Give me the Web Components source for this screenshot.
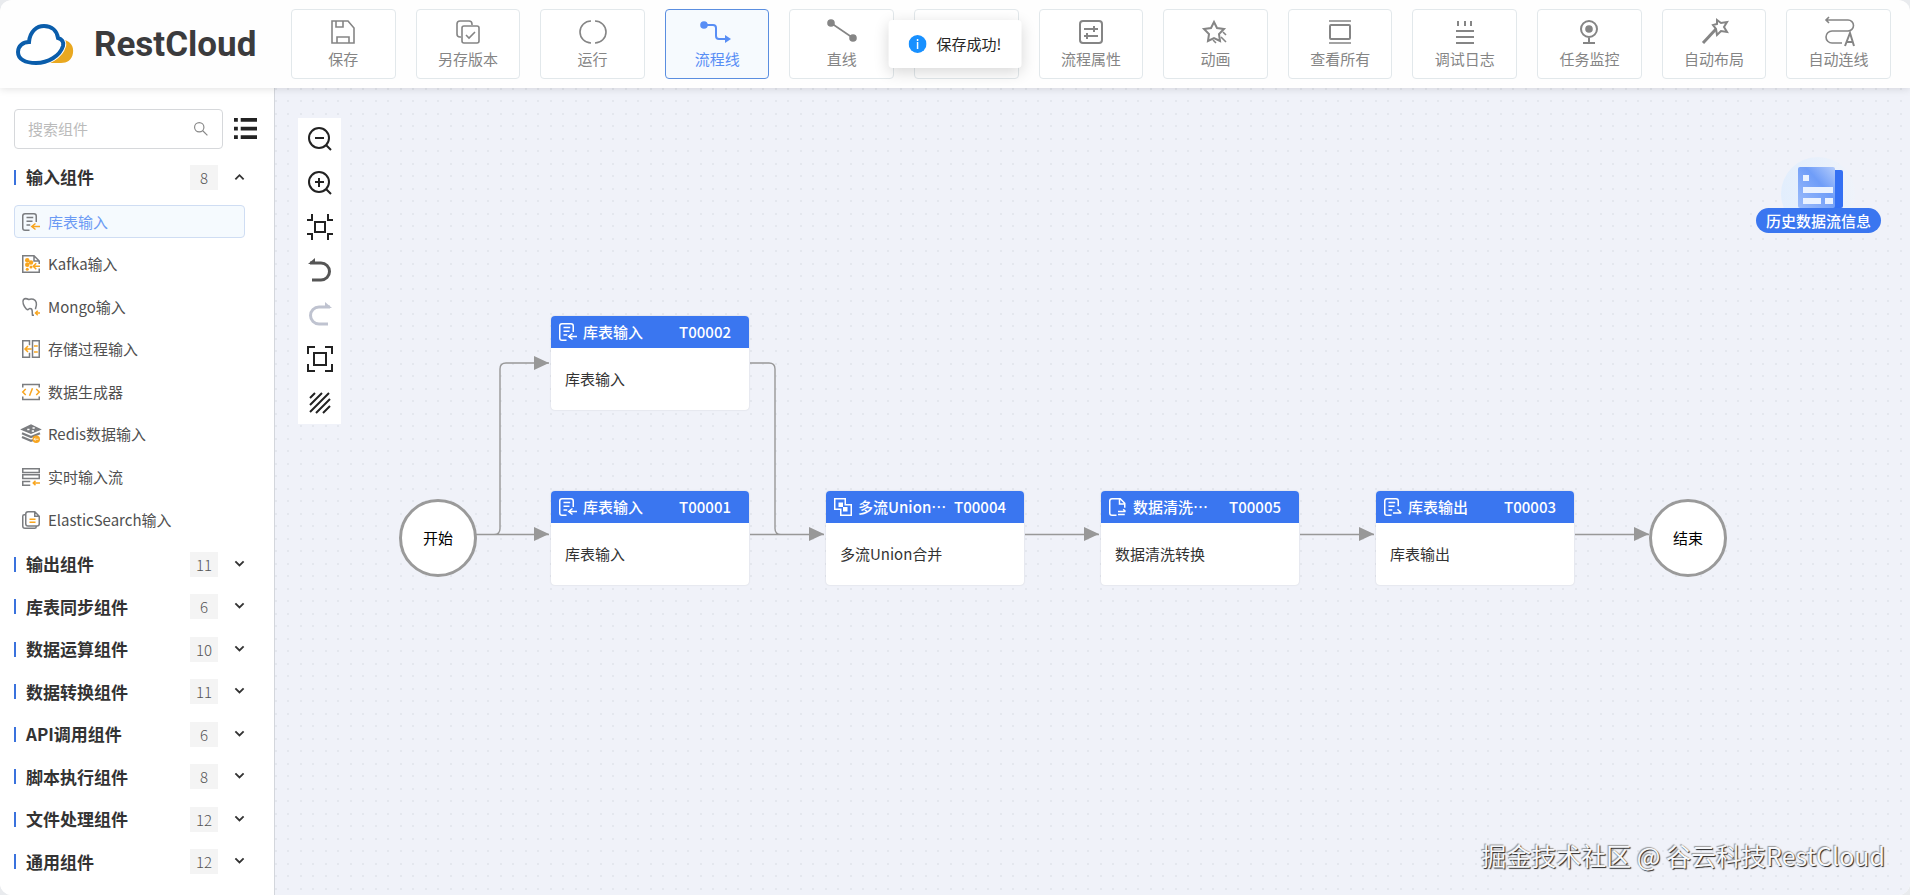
<!DOCTYPE html>
<html lang="zh-CN">
<head>
<meta charset="utf-8">
<title>RestCloud</title>
<style>
  html,
  body {
    height: 100%;
    margin: 0;
    background-color: #e9ebee;
  }
  body {
    font-family: "Noto Sans CJK SC", "Noto Sans", sans-serif;
    font-size: 15px;
    line-height: 20px;
    color: #333;
  }
</style>
</head>
<body>
<rc-app>
  <rc-logo slot="logo"></rc-logo>
  <rc-tool slot="tool" icon="save">保存</rc-tool>
  <rc-tool slot="tool" icon="copy">另存版本</rc-tool>
  <rc-tool slot="tool" icon="run">运行</rc-tool>
  <rc-tool slot="tool" icon="flow" active>流程线</rc-tool>
  <rc-tool slot="tool" icon="line">直线</rc-tool>
  <rc-tool slot="tool"></rc-tool>
  <rc-tool slot="tool" icon="props">流程属性</rc-tool>
  <rc-tool slot="tool" icon="star">动画</rc-tool>
  <rc-tool slot="tool" icon="all">查看所有</rc-tool>
  <rc-tool slot="tool" icon="log">调试日志</rc-tool>
  <rc-tool slot="tool" icon="monitor">任务监控</rc-tool>
  <rc-tool slot="tool" icon="wand">自动布局</rc-tool>
  <rc-tool slot="tool" icon="route">自动连线</rc-tool>

  <rc-sidebar slot="sidebar">
    <rc-group label="输入组件" count="8" open>
      <rc-item icon="table-in" selected>库表输入</rc-item>
      <rc-item icon="kafka">Kafka输入</rc-item>
      <rc-item icon="mongo">Mongo输入</rc-item>
      <rc-item icon="procedure">存储过程输入</rc-item>
      <rc-item icon="generator">数据生成器</rc-item>
      <rc-item icon="redis">Redis数据输入</rc-item>
      <rc-item icon="stream">实时输入流</rc-item>
      <rc-item icon="elastic">ElasticSearch输入</rc-item>
    </rc-group>
    <rc-group label="输出组件" count="11"></rc-group>
    <rc-group label="库表同步组件" count="6"></rc-group>
    <rc-group label="数据运算组件" count="10"></rc-group>
    <rc-group label="数据转换组件" count="11"></rc-group>
    <rc-group label="API调用组件" count="6"></rc-group>
    <rc-group label="脚本执行组件" count="8"></rc-group>
    <rc-group label="文件处理组件" count="12"></rc-group>
    <rc-group label="通用组件" count="12"></rc-group>
  </rc-sidebar>

  <rc-canvas slot="canvas">
    <rc-palette></rc-palette>
    <rc-terminal x="124" y="411">开始</rc-terminal>
    <rc-node x="276" y="228" icon="table-in" label="库表输入" code="T00002">库表输入</rc-node>
    <rc-node x="276" y="403" icon="table-in" label="库表输入" code="T00001">库表输入</rc-node>
    <rc-node x="551" y="403" icon="union" label="多流Union…" code="T00004">多流Union合并</rc-node>
    <rc-node x="826" y="403" icon="clean" label="数据清洗…" code="T00005">数据清洗转换</rc-node>
    <rc-node x="1101" y="403" icon="table-out" label="库表输出" code="T00003">库表输出</rc-node>
    <rc-terminal x="1374" y="411">结束</rc-terminal>
    <rc-history slot="corner">历史数据流信息</rc-history>
    <rc-watermark slot="mark">掘金技术社区 @ 谷云科技RestCloud</rc-watermark>
  </rc-canvas>

  <rc-toast slot="toast">保存成功!</rc-toast>
</rc-app>

<script>
// Every icon is drawn with currentColor; --accent is the second colour of the
// component icons.
const ICONS = {
  save: `<path d="M1 1h16l6 7v15H1zM5 1v6h7V1M6 23v-6h12v6"/>`,
  copy: `<path d="M5 17H4a3 3 0 0 1-3-3V4a3 3 0 0 1 3-3h9a3 3 0 0 1 3 3v1"/><rect x="6" y="6" width="17" height="17" rx="2"/><path d="m10 15 3 3 6-6"/>`,
  run: `<path d="M10 1a11 11 0 0 0 0 22M14 1a11 11 0 0 1 0 22"/>`,
  flow: `<circle cx="-1" cy="5" r="3" fill="currentColor"/><path d="M0 5h8q3 0 3 3v8q0 3 3 3h7" stroke-width="2"/><path d="m20 15 6 4-6 4z" fill="currentColor" stroke="none"/>`,
  line: `<circle cx="1" cy="3" r="3" fill="currentColor"/><circle cx="23" cy="18" r="3" fill="currentColor"/><path d="m1 3 22 15"/>`,
  props: `<rect x="1" y="1" width="22" height="22" rx="3" stroke-width="2"/><path d="M5 9h14M15 6v6M5 16h14M8 13v6" stroke-width="2"/>`,
  star: `<path d="m10 2 3 6 7 1-5 5 1 7-6-3-6 3 1-7-5-5 7-1z" stroke-width="2"/><path d="m19 12 3 3M17 17l5 5M9 20l3 3"/>`,
  all: `<path d="M1 1h22M1 23h22"/><rect x="2" y="5" width="20" height="14" rx="1" stroke-width="2"/>`,
  log: `<path d="M5 1v5M12 1v5M18 1v5M3 11h18M3 17h18M3 23h18" stroke-width="2"/>`,
  monitor: `<circle cx="12" cy="9" r="8" stroke-width="2"/><circle cx="12" cy="9" r="3" fill="currentColor"/><path d="M12 18v5M6 23h12" stroke-width="2"/>`,
  wand: `<path d="M1 23 14 9" stroke-width="3"/><path d="m15 0 4 3 6-1-3 5 3 5-6-1-4 4-1-6-3-4 4-1z" stroke-width="2"/>`,
  route: `<path d="M-1 0h22a5 5 0 0 1 0 11H5a5 5 0 0 0 0 12h10M2-3-1 0l3 3"/><path d="m18 26 5-13 4 13M20 22h6" stroke-width="2"/>`,

  "zoom-out": `<circle cx="11" cy="11" r="10"/><path d="M7 11h9M18 18l5 5"/>`,
  "zoom-in": `<circle cx="11" cy="11" r="10"/><path d="M7 11h9M11 7v9M18 18l5 5"/>`,
  fit: `<rect x="7" y="7" width="10" height="10"/><path d="M-1 5h5V-1M25 5h-5V-1M-1 19h5v6M25 19h-5v6"/>`,
  undo: `<path d="M2 4h11a8 8 0 0 1 0 17H4" stroke-width="3"/><path d="M0 5 7-1v6z" fill="currentColor" stroke="none"/>`,
  redo: `<path d="M22 4H11a8 8 0 0 0 0 17h9" stroke-width="3"/><path d="m24 5-7-6v6z" fill="currentColor" stroke="none"/>`,
  full: `<rect x="6" y="6" width="12" height="12"/><path d="M0 7V0h7M17 0h7v7M24 17v7h-7M7 24H0v-7"/>`,
  hatch: `<path d="M2 7l5-5M2 14 14 2M2 21 21 2M8 22 22 8M15 22l7-7"/>`,
  list: `<path d="M7 2h17M7 11h17M7 20h17" stroke-width="4"/><path d="M0 2h4M0 11h4M0 20h4" stroke-width="4"/>`,
  search: `<circle cx="9" cy="9" r="8"/><path d="m15 15 8 8"/>`,
  up: `<path d="m3 16 9-9 9 9" stroke-width="4"/>`,
  down: `<path d="m3 5 9 9 9-9" stroke-width="4"/>`,

  "table-in": `<path d="M19 12V4q0-3-3-3H4Q1 1 1 4v16q0 3 3 3h6M6 6h9M6 11h8M6 16h5"/><path class="a" d="M24 18H13m5-4-5 4 5 4"/>`,
  "table-out": `<path d="M19 11V4q0-3-3-3H4Q1 1 1 4v16q0 3 3 3h6M6 6h9M6 11h8M6 16h5"/><path class="a" d="M12 20h11m-5-5 5 5"/>`,
  kafka: `<path d="M23 18v5H1V1h15l7 7v4M16 1v7h7"/><path class="a" d="M24 15h-9m4-4-4 4 4 4"/><g class="f"><circle cx="7" cy="7" r="3"/><circle cx="7" cy="13" r="3"/><circle cx="7" cy="19" r="2"/><circle cx="12" cy="10" r="3"/><circle cx="12" cy="16" r="2"/></g>`,
  mongo: `<path d="M6 15C2 11 0 5 2 2c2-2 5-1 7 0 4-2 9 0 10 4 1 5-1 6-1 9M6 15c3 2 3-2 5-1 4 0 2 4 3 9h2"/><path class="a" d="M24 20h-6m3-3-3 3 3 3"/>`,
  procedure: `<path d="M10 7V1H1v22h9v-6M14 1h9v22h-9z"/><path class="a" d="M13 12H4m4-4-4 4 4 4M16 8h5M16 16h5"/>`,
  generator: `<path d="M1 6V2h22v4M1 18v4h22v-4"/><path class="a" d="m5 8-4 4 4 4M19 8l4 4-4 4M14 7l-4 10"/>`,
  redis: `<path d="m0 6 12-6 12 6-12 5z" fill="currentColor"/><path d="m0 11 12 5 12-5M0 16l12 5 3-1" stroke-width="3"/><path d="M7 6h3M14 4h3M13 8h3" stroke="#fff"/><circle class="f" cx="19" cy="19" r="5"/><path d="M22 19h-6m2-2-2 2 2 2" stroke="#fff" stroke-width="1"/>`,
  stream: `<rect x="1" y="1" width="22" height="5"/><rect x="1" y="9" width="22" height="5"/><path d="M11 18H1v5h10"/><path class="a" d="M24 20h-9m3-3-3 3 3 3"/>`,
  elastic: `<path d="M5 5H3Q1 5 1 7v13q0 3 3 3h13q2 0 2-2M8 1h9l6 6v10q0 3-3 3H8q-3 0-3-3V4q0-3 3-3zM17 1v6h6"/><path class="a" d="M10 11h8M10 15h8"/>`,
  union: `<path d="M1 1h14v8h8v14H9v-8H1z"/><path d="M7 7h4v4H7zM13 13h4v4h-4z" fill="currentColor"/>`,
  clean: `<path d="M21 13V7l-6-6H4Q1 1 1 4v16q0 3 3 3h6M14 1v7h7M12 18h10M12 22h9M22 18l-3-3"/>`
};

function clone(html) {
  const template = document.createElement("template");
  template.innerHTML = html;
  return template.content.cloneNode(true);
}

function define(name, html, setup) {
  customElements.define(
    name,
    class extends HTMLElement {
      constructor() {
        super();
        this.attachShadow({ mode: "open" }).append(clone(html));
      }

      connectedCallback() {
        if (setup) setup(this, this.shadowRoot);
      }
    }
  );
}

customElements.define(
  "rc-icon",
  class extends HTMLElement {
    static get observedAttributes() {
      return ["name"];
    }

    constructor() {
      super();
      this.attachShadow({ mode: "open" }).append(
        clone(`
<style>
  :host {
    display: block;
    flex: none;
    width: var(--size, 24px);
    height: var(--size, 24px);
  }
  svg {
    display: block;
    width: 100%;
    height: 100%;
    overflow: visible;
    fill: none;
    stroke: currentColor;
    stroke-width: var(--stroke, 1.6);
  }
  .a {
    stroke: var(--accent, currentColor);
  }
  .f {
    fill: var(--accent, currentColor);
    stroke: none;
  }
</style>
<svg viewBox="0 0 24 24" aria-hidden="true"></svg>
`)
      );
    }

    // The name is often set by a parent after the icon has been connected
    attributeChangedCallback(attribute, before, name) {
      this.shadowRoot.querySelector("svg").innerHTML = ICONS[name] || "";
    }
  }
);

define(
  "rc-app",
  `
<style>
  :host {
    display: flex;
    flex-direction: column;
    min-height: 100vh;
    border-radius: 12px;
    overflow: hidden;
    position: relative;
    background-color: #fff;
  }
  header {
    display: flex;
    align-items: center;
    height: 88px;
    box-sizing: border-box;
    padding: 0 19px 0 16px;
    background-color: #fefefe;
    box-shadow: 0 1px 8px rgba(0, 0, 0, 0.12);
    z-index: 1;
  }
  .tools {
    display: flex;
    flex: 1;
    gap: 20px;
  }
  main {
    display: flex;
    flex: 1;
  }
</style>
<header>
  <slot name="logo"></slot>
  <div class="tools" role="toolbar"><slot name="tool"></slot></div>
</header>
<main>
  <slot name="sidebar"></slot>
  <slot name="canvas"></slot>
</main>
<slot name="toast"></slot>
`
);

define(
  "rc-logo",
  `
<style>
  :host {
    display: flex;
    align-items: center;
    gap: 20px;
    width: 275px;
    flex: none;
    padding-top: 2px;
    font-family: Roboto, sans-serif;
    font-size: 35px;
    font-weight: 700;
    line-height: 40px;
    color: #3b3b3d;
  }
  svg {
    display: block;
    width: 58px;
    height: 46px;
  }
</style>
<svg viewBox="0 0 58 46" aria-hidden="true">
  <path d="M49 18c6 2 9 7 8 13-1 7-6 10-12 10H32c9-3 16-11 17-23z" fill="#e9a820"/>
  <path d="M13 20C14 9 21 4 28 4c8 0 13 5 14 12 4 1 6 4 5 8-3 10-15 17-27 17C9 41 2 37 2 30c0-6 5-10 11-10z" fill="#fff" stroke="#fff" stroke-width="6"/>
  <path d="M13 20C14 9 21 4 28 4c8 0 13 5 14 12 4 1 6 4 5 8-3 10-15 17-27 17C9 41 2 37 2 30c0-6 5-10 11-10z" fill="#fff" stroke="#0a5dab" stroke-width="4"/>
</svg>
<span>RestCloud</span>
`
);

define(
  "rc-tool",
  `
<style>
  :host {
    display: block;
    flex: 1 1 0;
    min-width: 0;
  }
  button {
    display: flex;
    flex-direction: column;
    align-items: center;
    justify-content: center;
    gap: 5px;
    width: 100%;
    height: 70px;
    padding: 0;
    border: 1px solid #e2e8eb;
    border-radius: 4px;
    background-color: #fff;
    font: inherit;
    color: #858585;
    white-space: nowrap;
  }
  :host([active]) button {
    border-color: #5a8ee0;
    background-color: #f6fafe;
    color: #588ef5;
  }
</style>
<button type="button"><rc-icon></rc-icon><span><slot></slot></span></button>
`,
  (host, root) => {
    root.querySelector("rc-icon").setAttribute("name", host.getAttribute("icon"));
    if (host.hasAttribute("active")) {
      root.querySelector("button").setAttribute("aria-pressed", "true");
    }
  }
);

define(
  "rc-toast",
  `
<style>
  :host {
    position: absolute;
    top: 20px;
    left: 50%;
    transform: translateX(-50%);
    display: flex;
    align-items: center;
    gap: 10px;
    height: 48px;
    padding: 0 20px;
    border-radius: 4px;
    background-color: #fff;
    box-shadow: 0 4px 15px rgba(0, 0, 0, 0.16);
    color: #262626;
    white-space: nowrap;
    z-index: 2;
  }
  svg {
    display: block;
    width: 18px;
    height: 18px;
  }
</style>
<svg viewBox="0 0 18 18" aria-hidden="true">
  <circle cx="9" cy="9" r="9" fill="#1890ff"/>
  <path d="M9 4v2M9 7v7" stroke="#fff" stroke-width="1.5"/>
</svg>
<span role="status"><slot></slot></span>
`
);

define(
  "rc-sidebar",
  `
<style>
  :host {
    display: flex;
    flex-direction: column;
    flex: none;
    gap: 7px;
    width: 275px;
    box-sizing: border-box;
    padding: 21px 17px 12px 14px;
    border-right: 1px solid #d3d6dc;
    background-color: #fff;
  }
  form {
    display: flex;
    align-items: center;
    gap: 11px;
  }
  label {
    display: flex;
    align-items: center;
    flex: 1;
    min-width: 0;
    height: 40px;
    box-sizing: border-box;
    padding: 0 14px 0 13px;
    border: 1px solid #d6d8db;
    border-radius: 4px;
    color: #888;
    --size: 14px;
    --stroke: 2;
  }
  input {
    flex: 1;
    min-width: 0;
    padding: 0;
    border: 0;
    outline: 0;
    background: none;
    font: inherit;
  }
  input::placeholder {
    color: #bbb;
  }
  button {
    padding: 0;
    border: 0;
    background: none;
    color: #222;
    --size: 23px;
  }
  nav {
    display: flex;
    flex: 1;
    flex-direction: column;
    margin-right: 12px;
  }
</style>
<form>
  <label>
    <input type="text" placeholder="搜索组件" aria-label="搜索组件">
    <rc-icon name="search"></rc-icon>
  </label>
  <button type="button" aria-label="列表"><rc-icon name="list"></rc-icon></button>
</form>
<nav><slot></slot></nav>
`
);

define(
  "rc-group",
  `
<style>
  :host {
    display: flex;
    flex-direction: column;
    flex: 1 0 42px;
  }
  :host([open]) {
    flex: 9 0 382px;
  }
  .head {
    display: flex;
    align-items: center;
    flex: 1;
    padding: 0;
    border: 0;
    background: none;
    font: inherit;
    color: #333;
    text-align: left;
    --size: 11px;
  }
  .head::before {
    content: "";
    width: 2px;
    height: 15px;
    margin-right: 10px;
    background-color: #3a72dd;
  }
  .title {
    flex: 1;
    font-size: 17px;
    font-weight: 700;
    line-height: 24px;
  }
  .count {
    width: 28px;
    margin-right: 16px;
    background-color: #f4f4f4;
    color: #555;
    font-weight: 300;
    line-height: 25px;
    text-align: center;
  }
  .list {
    display: none;
  }
  :host([open]) .list {
    display: flex;
    flex-direction: column;
    flex: 8;
    padding: 2px 0;
  }
</style>
<button class="head" type="button">
  <span class="title"></span>
  <span class="count"></span>
  <rc-icon></rc-icon>
</button>
<div class="list"><slot></slot></div>
`,
  (host, root) => {
    const open = host.hasAttribute("open");
    root.querySelector(".title").textContent = host.getAttribute("label");
    root.querySelector(".count").textContent = host.getAttribute("count");
    root.querySelector("rc-icon").setAttribute("name", open ? "up" : "down");
    root.querySelector("button").setAttribute("aria-expanded", open);
  }
);

define(
  "rc-item",
  `
<style>
  :host {
    display: flex;
    align-items: center;
    flex: 1;
  }
  button {
    display: flex;
    align-items: center;
    gap: 8px;
    width: 100%;
    height: 33px;
    padding: 0 7px;
    border: 1px solid transparent;
    border-radius: 4px;
    background: none;
    font: inherit;
    color: #505050;
    --size: 18px;
    --stroke: 2;
    --accent: #f8a51f;
  }
  rc-icon {
    color: #7b7d80;
  }
  :host([selected]) button {
    border-color: #cfddf3;
    background-color: #f5fafe;
    color: #6b9af4;
  }
</style>
<button type="button"><rc-icon></rc-icon><slot></slot></button>
`,
  (host, root) => {
    root.querySelector("rc-icon").setAttribute("name", host.getAttribute("icon"));
  }
);

define(
  "rc-canvas",
  `
<style>
  :host {
    --dot: #e4e7ee;
    display: block;
    position: relative;
    flex: 1;
    min-width: 0;
    overflow: hidden;
    background-color: #f0f2f9;
    background-image: radial-gradient(circle at 1px 1px, var(--dot) 1px, transparent 1px),
      radial-gradient(circle at 13px 1px, var(--dot) 1px, transparent 1px),
      radial-gradient(circle at 1px 13px, var(--dot) 1px, transparent 1px),
      radial-gradient(circle at 13px 13px, var(--dot) 1px, transparent 1px);
    background-size: 25px 25px;
  }
  .wires {
    position: absolute;
    top: 0;
    left: 0;
    width: 100%;
    height: 100%;
    fill: none;
    stroke: #989898;
    stroke-width: 1.4;
  }
  .tips {
    fill: #989898;
    stroke: none;
  }
  .corner {
    position: absolute;
    top: 68px;
    right: 29px;
  }
  .mark {
    position: absolute;
    right: 25px;
    bottom: 22px;
  }
</style>
<svg class="wires" aria-hidden="true">
  <path d="M201 446.5H274M201 446.5H219q6 0 6-6V281q0-6 6-6H274"/>
  <path d="M475 446.5H549M475 275H494q6 0 6 6V440.5q0 6 6 6H549"/>
  <path d="M750 446.5H824M1025 446.5H1099M1300 446.5H1374"/>
  <path class="tips" d="M259 268v14l15-7zM259 439v14l15-7zM534 439v14l15-7zM809 439v14l15-7zM1084 439v14l15-7zM1359 439v14l15-7z"/>
</svg>
<slot></slot>
<div class="corner"><slot name="corner"></slot></div>
<div class="mark"><slot name="mark"></slot></div>
`
);

define(
  "rc-palette",
  `
<style>
  :host {
    position: absolute;
    top: 30px;
    left: 23px;
    display: flex;
    flex-direction: column;
    gap: 2px;
    background-color: #fff;
    --stroke: 2;
  }
  button {
    display: flex;
    align-items: center;
    justify-content: center;
    width: 43px;
    height: 42px;
    padding: 0;
    border: 0;
    background: none;
    color: #222;
  }
  .soft {
    color: #555;
  }
  button:disabled {
    color: #bfc3d0;
  }
</style>
<button type="button" aria-label="缩小"><rc-icon name="zoom-out"></rc-icon></button>
<button type="button" aria-label="放大"><rc-icon name="zoom-in"></rc-icon></button>
<button type="button" aria-label="适应"><rc-icon name="fit"></rc-icon></button>
<button type="button" aria-label="撤销" class="soft"><rc-icon name="undo"></rc-icon></button>
<button type="button" aria-label="重做" disabled><rc-icon name="redo"></rc-icon></button>
<button type="button" aria-label="全屏"><rc-icon name="full"></rc-icon></button>
<button type="button" aria-label="网格"><rc-icon name="hatch"></rc-icon></button>
`
);

// Nodes and terminals sit at free coordinates on the canvas
function place(host) {
  host.style.left = host.getAttribute("x") + "px";
  host.style.top = host.getAttribute("y") + "px";
}

define(
  "rc-node",
  `
<style>
  :host {
    position: absolute;
    width: 198px;
    border-radius: 4px;
    overflow: hidden;
    background-color: #fff;
    box-shadow: 0 0 2px rgba(0, 0, 0, 0.14);
  }
  .head {
    display: flex;
    align-items: center;
    gap: 6px;
    height: 32px;
    box-sizing: border-box;
    padding: 0 18px 0 8px;
    background-color: #3a76f0;
    color: #fff;
    font-weight: 500;
    white-space: nowrap;
    --size: 18px;
    --stroke: 2;
  }
  .title {
    flex: 1;
  }
  .body {
    display: flex;
    align-items: center;
    height: 62px;
    padding: 0 14px;
  }
</style>
<div class="head"><rc-icon></rc-icon><span class="title"></span><span class="code"></span></div>
<div class="body"><slot></slot></div>
`,
  (host, root) => {
    place(host);
    root.querySelector("rc-icon").setAttribute("name", host.getAttribute("icon"));
    root.querySelector(".title").textContent = host.getAttribute("label");
    root.querySelector(".code").textContent = host.getAttribute("code");
  }
);

define(
  "rc-terminal",
  `
<style>
  :host {
    position: absolute;
    display: flex;
    align-items: center;
    justify-content: center;
    width: 78px;
    height: 78px;
    box-sizing: border-box;
    border: 3px solid #9a9a9a;
    border-radius: 50%;
    background-color: #fff;
    color: #000;
  }
</style>
<slot></slot>
`,
  place
);

define(
  "rc-history",
  `
<style>
  :host {
    display: flex;
    flex-direction: column;
    align-items: center;
  }
  svg {
    display: block;
    width: 76px;
    height: 52px;
  }
  a {
    padding: 0 10px;
    border-radius: 13px;
    background-color: #3a76f0;
    color: #fff;
    font-weight: 500;
    line-height: 25px;
    text-decoration: none;
  }
</style>
<svg viewBox="0 0 76 52" aria-hidden="true">
  <defs>
    <linearGradient id="page" x1="1" y1="0" x2="0" y2="1">
      <stop offset="0" stop-color="#b4ccfb"/>
      <stop offset=".4" stop-color="#6f9df8"/>
      <stop offset="1" stop-color="#9dbdfb"/>
    </linearGradient>
    <linearGradient id="halo">
      <stop offset="0" stop-color="#e2eefd"/>
      <stop offset="1" stop-color="#eff3fa"/>
    </linearGradient>
  </defs>
  <circle cx="38" cy="38" r="37" fill="url(#halo)"/>
  <rect x="40" y="14" width="23" height="38" rx="2" fill="#3470f3"/>
  <rect x="18" y="11" width="37" height="41" rx="2" fill="url(#page)"/>
  <path d="M23 19h6v6h-6zM23 31h30v6H23zM23 42h18v6H23zM45 42h8v6h-8z" fill="#eaf2ff"/>
</svg>
<a href="#"><slot></slot></a>
`
);

define(
  "rc-watermark",
  `
<style>
  :host {
    display: block;
    color: #f7f8fb;
    font-size: 25px;
    line-height: 36px;
    white-space: nowrap;
    text-shadow: 1px 1px 1px #222, -1px -1px 1px #999;
  }
</style>
<slot></slot>
`
);
</script>
</body>
</html>
